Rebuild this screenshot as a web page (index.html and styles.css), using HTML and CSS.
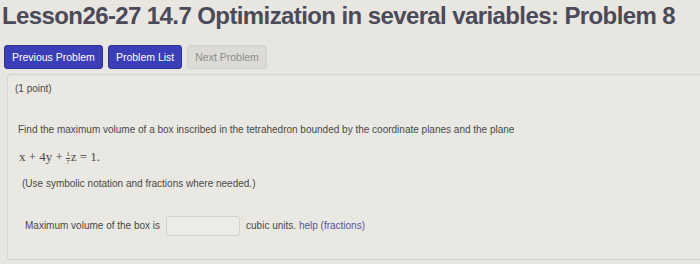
FILE: index.html
```html
<!DOCTYPE html>
<html lang="en">
<head>
  <meta charset="UTF-8" />
  <title>Lesson26-27 14.7 Optimization in several variables: Problem 8</title>
  <link rel="stylesheet" href="styles.css">
</head>
<body>
  <h1 class="title">Lesson26-27 14.7 Optimization in several variables: Problem 8</h1>

  <div class="nav">
    <a class="btn" href="#">Previous Problem</a>
    <a class="btn" href="#">Problem List</a>
    <span class="btn disabled">Next Problem</span>
  </div>

  <div class="problem">
    <p class="points">(1 point)</p>

    <p class="question">Find the maximum volume of a box inscribed in the tetrahedron bounded by the coordinate planes and the plane</p>
    <p class="math">x + 4y + <span class="frac"><span class="num">1</span><span class="den">7</span></span>z = 1.</p>
    <p class="note">(Use symbolic notation and fractions where needed.)</p>

    <div class="answer">
      <span>Maximum volume of the box is</span>
      <input type="text" class="answer-input" />
      <span>cubic units. <a href="#" class="help">help (fractions)</a></span>
    </div>
  </div>
</body>
</html>
```

FILE: styles.css
```css
body {
  font-family: "Liberation Sans", Arial, sans-serif;
  background-color: #e8e6e1;
  color: #4a4946;
  margin: 0;
  height: 264px;
  overflow: hidden;
}
.title {
  font-size: 24px;
  letter-spacing: -0.6px;
  white-space: nowrap;
  font-weight: bold;
  color: #4b4a58;
  margin: 0;
  padding: 1px 0 0 2px;
  line-height: 30px;
}
.nav {
  display: flex;
  gap: 5px;
  margin: 14px 0 0 4px;
}
.btn {
  display: inline-block;
  font-size: 10.5px;
  padding: 0 7px;
  line-height: 22px;
  border-radius: 3px;
  color: #fff;
  background-color: #3a3eb9;
  text-decoration: none;
  border: 1px solid #2f338f;
}
.btn.disabled {
  background-color: #dcdbd6;
  color: #8e8d8a;
  border-color: #d2d1cc;
}
.problem {
  margin: 5px 0 0 7px;
  background-color: #e9e8e3;
  border: 1px solid #d6d4ce;
  border-right: 0;
  border-radius: 4px 0 0 4px;
  height: 177px;
  padding: 7px 0 0 7px;
  font-size: 10px;
}
.problem p {
  margin: 0;
}
.points {
  line-height: 14px;
}
.question {
  margin-top: 27px !important;
  padding-left: 3px;
  line-height: 14px;
}
.math {
  font-family: "Liberation Serif", "Times New Roman", serif;
  font-size: 13px;
  margin-top: 12px !important;
  padding-left: 4px;
  line-height: 16px;
}
.frac {
  display: inline-flex;
  flex-direction: column;
  vertical-align: middle;
  font-size: 7px;
  line-height: 7px;
  margin-right: 1px;
  text-align: center;
}
.frac .num {
  border-bottom: 1px solid #4a4946;
}
.note {
  margin-top: 11px !important;
  padding-left: 7px;
  line-height: 14px;
}
.answer {
  display: flex;
  align-items: center;
  gap: 6px;
  margin-top: 25px;
  padding-left: 10px;
}
.answer-input {
  width: 72px;
  height: 18px;
  padding: 0;
  border: 1px solid #d3d1cb;
  border-radius: 3px;
  background-color: #ecebe6;
  margin: 0;
}
.help {
  color: #56579a;
  text-decoration: none;
}
```
